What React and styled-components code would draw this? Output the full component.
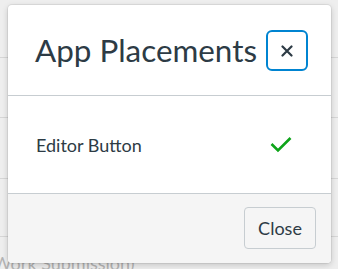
import React from "react";
import styled, { createGlobalStyle } from "styled-components";

const GlobalStyle = createGlobalStyle`
  html, body {
    margin: 0;
    padding: 0;
    background: #ededed;
    font-family: Lato, "Noto Sans", sans-serif;
    overflow: hidden;
  }
`;

const Page = styled.div`
  position: relative;
  width: 338px;
  height: 269px;
  overflow: hidden;
  background: #eeeeee;
`;

const BgRow = styled.div`
  height: ${(p) => p.h}px;
  border-bottom: 1px solid #d6d6d6;
`;

const BgText = styled.div`
  margin-left: -7px;
  padding-top: 16px;
  font-size: 18px;
  line-height: 20px;
  color: #b4b4b4;
`;

const Modal = styled.div`
  position: absolute;
  left: 8px;
  top: 5px;
  width: 323px;
  height: 258px;
  display: flex;
  flex-direction: column;
  background: #ffffff;
  border-radius: 4px;
  box-shadow: 0 0 0 1px rgba(0, 0, 0, 0.06), 0 2px 6px rgba(0, 0, 0, 0.18);
  overflow: hidden;
`;

const Header = styled.div`
  height: 90px;
  display: flex;
  align-items: center;
  justify-content: space-between;
  padding: 0 23px 0 27px;
  border-bottom: 1px solid #c7cdd1;
`;

const Title = styled.h2`
  margin: 0;
  font-size: 31.4px;
  font-weight: 400;
  color: #2d3b45;
`;

const IconButton = styled.button`
  width: 42px;
  height: 41px;
  display: flex;
  align-items: center;
  justify-content: center;
  padding: 0;
  margin-top: 1px;
  background: #ffffff;
  border: 2px solid #0084d1;
  border-radius: 6px;
  color: #2d3b45;
`;

const Body = styled.div`
  flex: 1;
  display: flex;
  align-items: center;
  justify-content: space-between;
  padding: 0 39px 0 28px;
  border-bottom: 1px solid #c7cdd1;
`;

const Label = styled.span`
  font-size: 18px;
  color: #2d3b45;
`;

const Footer = styled.div`
  height: 69px;
  display: flex;
  justify-content: flex-end;
  align-items: flex-start;
  padding: 13px 15px 0 0;
  box-sizing: border-box;
  background: #f5f5f5;
`;

const Button = styled.button`
  width: 72px;
  height: 42px;
  padding: 0;
  font-family: Lato, "Noto Sans", sans-serif;
  font-size: 18px;
  color: #2d3b45;
  background: #f5f5f5;
  border: 1px solid #c7cdd1;
  border-radius: 4px;
`;

export default function App() {
  return (
    <Page>
      <GlobalStyle />
      <BgRow h={57} />
      <BgRow h={59} />
      <BgRow h={60} />
      <BgRow h={57} />
      <BgText>Work Submission)</BgText>
      <Modal>
        <Header>
          <Title>App Placements</Title>
          <IconButton aria-label="Close">
            <svg width="12" height="12" viewBox="0 0 12 12">
              <path d="M1.5 1.5 L10.5 10.5 M10.5 1.5 L1.5 10.5" stroke="#2d3b45" strokeWidth="2.2" strokeLinecap="round" />
            </svg>
          </IconButton>
        </Header>
        <Body>
          <Label>Editor Button</Label>
          <svg width="22" height="17" viewBox="0 0 22 17">
            <path d="M1.5 8 L8 14.5 L20.5 2" fill="none" stroke="#0ea41a" strokeWidth="2.6" />
          </svg>
        </Body>
        <Footer>
          <Button>Close</Button>
        </Footer>
      </Modal>
    </Page>
  );
}
